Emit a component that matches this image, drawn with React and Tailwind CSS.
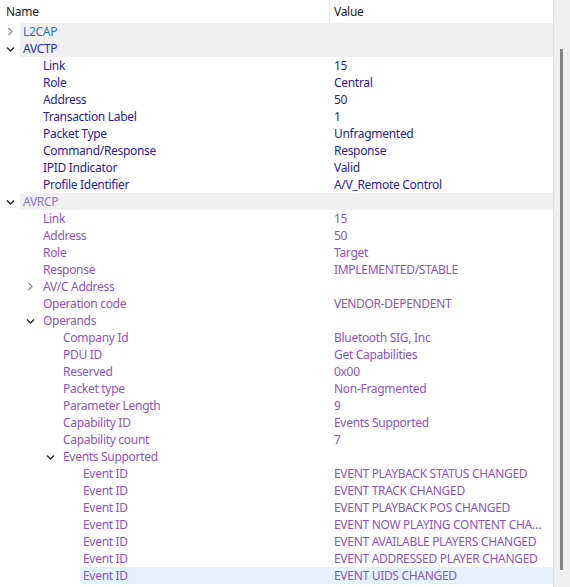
import React from "react";

const INDIGO = "text-[#2a1b9e]";
const PURPLE = "text-[#8a55c2]";

const rows = [
  { level: 0, name: "L2CAP", value: "", chevron: "closed", tone: "text-[#1f78b4]", band: true },
  { level: 0, name: "AVCTP", value: "", chevron: "open", tone: "text-[#2b2bbd]", band: true },
  { level: 1, name: "Link", value: "15", tone: INDIGO },
  { level: 1, name: "Role", value: "Central", tone: INDIGO },
  { level: 1, name: "Address", value: "50", tone: INDIGO },
  { level: 1, name: "Transaction Label", value: "1", tone: INDIGO },
  { level: 1, name: "Packet Type", value: "Unfragmented", tone: INDIGO },
  { level: 1, name: "Command/Response", value: "Response", tone: INDIGO },
  { level: 1, name: "IPID Indicator", value: "Valid", tone: INDIGO },
  { level: 1, name: "Profile Identifier", value: "A/V_Remote Control", tone: INDIGO },
  { level: 0, name: "AVRCP", value: "", chevron: "open", tone: "text-[#8a78bd]", band: true },
  { level: 1, name: "Link", value: "15", tone: PURPLE },
  { level: 1, name: "Address", value: "50", tone: PURPLE },
  { level: 1, name: "Role", value: "Target", tone: PURPLE },
  { level: 1, name: "Response", value: "IMPLEMENTED/STABLE", tone: PURPLE },
  { level: 1, name: "AV/C Address", value: "", chevron: "closed", tone: PURPLE },
  { level: 1, name: "Operation code", value: "VENDOR-DEPENDENT", tone: PURPLE },
  { level: 1, name: "Operands", value: "", chevron: "open", tone: PURPLE },
  { level: 2, name: "Company Id", value: "Bluetooth SIG, Inc", tone: PURPLE },
  { level: 2, name: "PDU ID", value: "Get Capabilities", tone: PURPLE },
  { level: 2, name: "Reserved", value: "0x00", tone: PURPLE },
  { level: 2, name: "Packet type", value: "Non-Fragmented", tone: PURPLE },
  { level: 2, name: "Parameter Length", value: "9", tone: PURPLE },
  { level: 2, name: "Capability ID", value: "Events Supported", tone: PURPLE },
  { level: 2, name: "Capability count", value: "7", tone: PURPLE },
  { level: 2, name: "Events Supported", value: "", chevron: "open", tone: PURPLE },
  { level: 3, name: "Event ID", value: "EVENT PLAYBACK STATUS CHANGED", tone: PURPLE },
  { level: 3, name: "Event ID", value: "EVENT TRACK CHANGED", tone: PURPLE },
  { level: 3, name: "Event ID", value: "EVENT PLAYBACK POS CHANGED", tone: PURPLE },
  { level: 3, name: "Event ID", value: "EVENT NOW PLAYING CONTENT CHANGED", tone: PURPLE },
  { level: 3, name: "Event ID", value: "EVENT AVAILABLE PLAYERS CHANGED", tone: PURPLE },
  { level: 3, name: "Event ID", value: "EVENT ADDRESSED PLAYER CHANGED", tone: PURPLE },
  { level: 3, name: "Event ID", value: "EVENT UIDS CHANGED", tone: PURPLE, selected: true },
];

const indent = ["w-0", "w-[20px]", "w-[40px]", "w-[60px]"];
const nameWidth = ["w-[311px]", "w-[291px]", "w-[271px]", "w-[251px]"];

function Chevron({ kind }) {
  if (kind === "closed") {
    return (
      <svg width="8" height="9" viewBox="0 0 8 9" className="text-[#8a8a8a]">
        <path d="M2.5 1 L6 4.5 L2.5 8" fill="none" stroke="currentColor" strokeWidth="1.2" />
      </svg>
    );
  }
  return (
    <svg width="9" height="8" viewBox="0 0 9 8" className="text-[#2a2a2a]">
      <path d="M1 2.5 L4.5 6 L8 2.5" fill="none" stroke="currentColor" strokeWidth="1.5" />
    </svg>
  );
}

function Row({ row }) {
  const bg = row.selected
    ? "bg-[#e5f1fb] rounded-[3px]"
    : row.band
    ? "bg-[#f0f0f0]"
    : "";
  return (
    <div className="flex h-[17px] items-center">
      <div className={`${indent[row.level]} shrink-0`} />
      <div className="w-[20px] shrink-0 flex items-center justify-center">
        {row.chevron && <Chevron kind={row.chevron} />}
      </div>
      <div className={`flex-1 h-full flex items-center pl-[3px] min-w-0 ${bg} ${row.tone}`}>
        <div className={`${nameWidth[row.level]} shrink-0 whitespace-nowrap`}>{row.name}</div>
        <div className="w-[212px] truncate">{row.value}</div>
      </div>
    </div>
  );
}

export default function App() {
  return (
    <div className="w-[570px] h-[587px] bg-white flex overflow-hidden text-[12px] leading-[17px] tracking-[-0.3px] font-['Segoe_UI','Noto_Sans',sans-serif]">
      <div className="w-[553px] flex flex-col">
        <div className="h-[23px] flex items-center text-[#1a1a1a]">
          <div className="w-[330px] h-full flex items-center pl-[6px] border-r border-[#e5e5e5]">Name</div>
          <div className="pl-[4px]">Value</div>
        </div>
        {rows.map((row, i) => (
          <Row key={i} row={row} />
        ))}
      </div>
      <div className="w-[17px] bg-[#f0f0f0] border-l border-[#e0e0e0] flex justify-center pt-[49px] pb-[17px]">
        <div className="w-[3px] h-[521px] bg-[#858585] ml-[-1px]" />
      </div>
    </div>
  );
}
